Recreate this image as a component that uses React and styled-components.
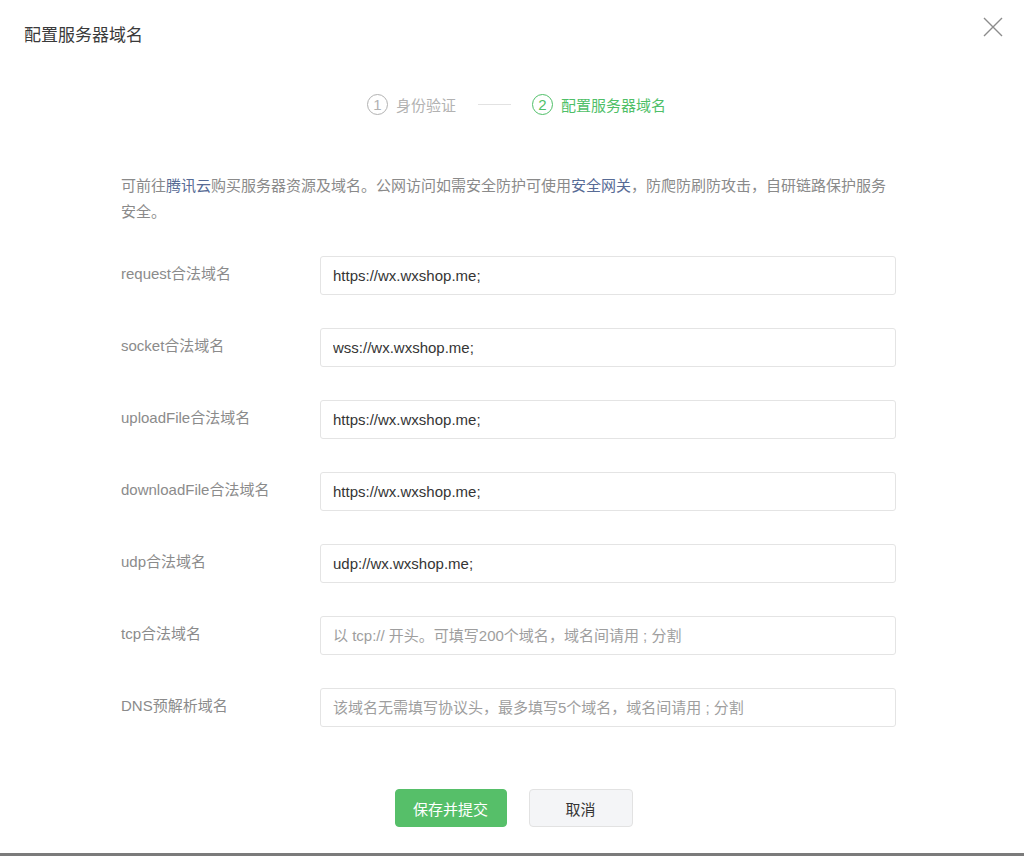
import { Fragment } from "react";
import styled, { createGlobalStyle } from "styled-components";

const GlobalStyle = createGlobalStyle`
  html, body {
    margin: 0;
    padding: 0;
    background: #7b7b7b;
    font-family: "Liberation Sans", "Noto Sans CJK SC", sans-serif;
  }
  * { box-sizing: border-box; }
`;

const fields = [
  { id: 1, label: "request合法域名", value: "https://wx.wxshop.me;" },
  { id: 2, label: "socket合法域名", value: "wss://wx.wxshop.me;" },
  { id: 3, label: "uploadFile合法域名", value: "https://wx.wxshop.me;" },
  { id: 4, label: "downloadFile合法域名", value: "https://wx.wxshop.me;" },
  { id: 5, label: "udp合法域名", value: "udp://wx.wxshop.me;" },
  { id: 6, label: "tcp合法域名", placeholder: "以 tcp:// 开头。可填写200个域名，域名间请用 ; 分割" },
  { id: 7, label: "DNS预解析域名", placeholder: "该域名无需填写协议头，最多填写5个域名，域名间请用 ; 分割" },
];

const Dialog = styled.div`
  height: 853px;
  background: #fff;
  display: flex;
  flex-direction: column;
`;

const Header = styled.header`
  display: flex;
  justify-content: space-between;
  align-items: flex-start;
  padding: 24px 20px 24px 24px;
`;

const Title = styled.h1`
  margin: 0;
  font-size: 17px;
  line-height: 24px;
  font-weight: 400;
  color: #3a3a3a;
`;

const Close = styled.button`
  margin-top: -8px;
  width: 22px;
  height: 22px;
  padding: 0;
  border: none;
  background: none;
  cursor: pointer;
  display: flex;
`;

const Steps = styled.ol`
  margin: 20px 0 0;
  padding: 0 0 0 9px;
  list-style: none;
  display: flex;
  justify-content: center;
  align-items: center;
  height: 24px;
`;

const Step = styled.li`
  display: flex;
  align-items: center;
  gap: 8px;
  font-size: 15px;
  color: ${(p) => (p.$active ? "#4fbf68" : "#b2b2b2")};
`;

const Num = styled.span`
  width: 21px;
  height: 21px;
  border-radius: 50%;
  border: 1.5px solid currentColor;
  display: flex;
  align-items: center;
  justify-content: center;
  font-size: 15px;
  line-height: 1;
`;

const Divider = styled.li`
  width: 33px;
  height: 1px;
  background: #e2e2e2;
  margin: 0 21px 0 22px;
`;

const Body = styled.main`
  width: 775px;
  margin: 57px 0 0 121px;
`;

const Intro = styled.p`
  margin: 0 0 31px;
  font-size: 15px;
  line-height: 26px;
  color: #8a8a8a;
`;

const Link = styled.a`
  color: #576b95;
  text-decoration: none;
`;

const Form = styled.div`
  display: grid;
  grid-template-columns: 199px 576px;
  row-gap: 33px;
  align-items: center;
`;

const Label = styled.label`
  font-size: 15px;
  line-height: 20px;
  padding-bottom: 4px;
  color: #8b8b8b;
`;

const Input = styled.input`
  height: 39px;
  width: 100%;
  padding: 0 12px;
  border: 1px solid #e4e4e4;
  border-radius: 3px;
  font: 15px "Liberation Sans", "Noto Sans CJK SC", sans-serif;
  color: #353535;
  outline: none;
  &::placeholder {
    color: #9e9e9e;
  }
`;

const Actions = styled.div`
  margin-top: 62px;
  display: flex;
  justify-content: center;
  gap: 22px;
  padding-left: 3px;
`;

const Button = styled.button`
  height: 38px;
  width: ${(p) => (p.$primary ? "112px" : "104px")};
  border-radius: 4px;
  border: 1px solid ${(p) => (p.$primary ? "#56bf69" : "#e2e2e2")};
  background: ${(p) => (p.$primary ? "#56bf69" : "#f4f5f7")};
  color: ${(p) => (p.$primary ? "#fff" : "#353535")};
  font: 15px "Liberation Sans", "Noto Sans CJK SC", sans-serif;
  cursor: pointer;
`;

const App = () => (
  <>
    <GlobalStyle />
    <Dialog>
      <Header>
        <Title>配置服务器域名</Title>
        <Close type="button" aria-label="close">
          <svg width="22" height="22" viewBox="0 0 22 22">
            <path d="M2 2 L20 20 M20 2 L2 20" stroke="#8c8c8c" strokeWidth="1.4" fill="none" />
          </svg>
        </Close>
      </Header>
      <Steps>
        <Step>
          <Num>1</Num>
          身份验证
        </Step>
        <Divider />
        <Step $active>
          <Num>2</Num>
          配置服务器域名
        </Step>
      </Steps>
      <Body>
        <Intro>
          可前往<Link href="#">腾讯云</Link>购买服务器资源及域名。公网访问如需安全防护可使用
          <Link href="#">安全网关</Link>，防爬防刷防攻击，自研链路保护服务安全。
        </Intro>
        <Form>
          {fields.map((f) => (
            <Fragment key={f.id}>
              <Label>{f.label}</Label>
              <Input defaultValue={f.value} placeholder={f.placeholder} />
            </Fragment>
          ))}
        </Form>
      </Body>
      <Actions>
        <Button $primary type="button">保存并提交</Button>
        <Button type="button">取消</Button>
      </Actions>
    </Dialog>
  </>
);

export default App;
